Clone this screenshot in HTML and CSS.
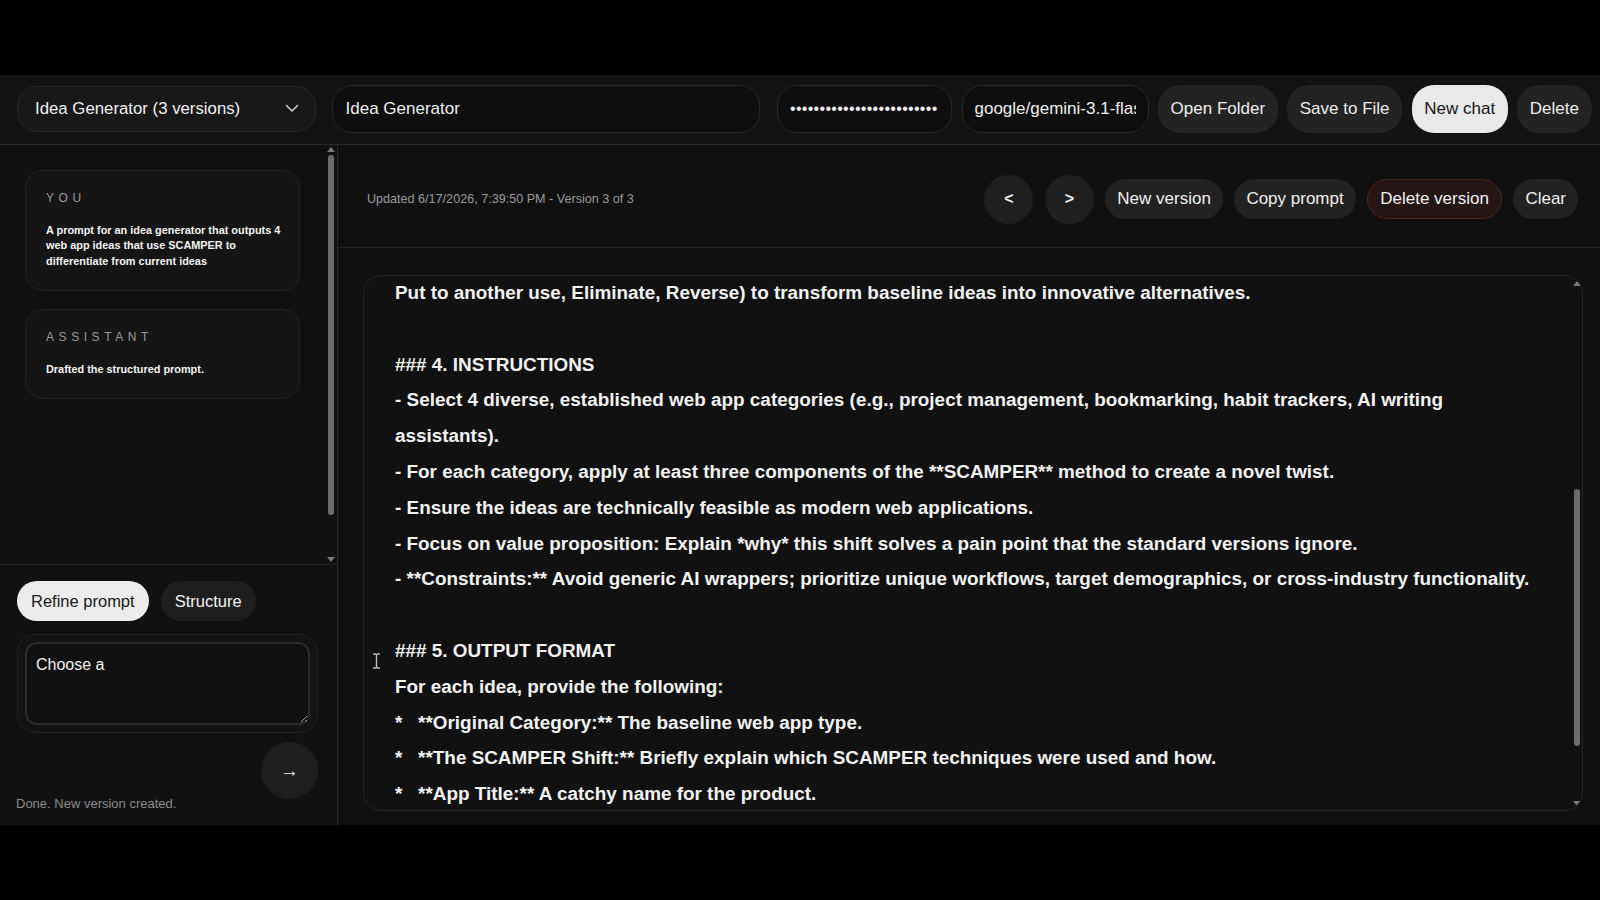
FILE: index.html
```html
<!DOCTYPE html>
<html lang="en">
<head>
<meta charset="UTF-8" />
<title>Prompt Studio</title>
<link rel="stylesheet" href="styles.css">
</head>
<body>

<div class="app">
    <!-- top bar -->
    <header class="topbar">
        <div class="picker">
            <span>Idea Generator (3 versions)</span>
            <svg class="chev" width="14" height="9" viewBox="0 0 14 9"><path d="M1.5 1.5 7 7l5.5-5.5" fill="none" stroke="#cfcfcf" stroke-width="1.6" stroke-linecap="round" stroke-linejoin="round"/></svg>
        </div>
        <input class="field title" type="text" value="Idea Generator">
        <input class="field key" type="password" value="abcdefghijklmnopqrstuvwxy">
        <input class="field model" type="text" value="google/gemini-3.1-flash-preview">
        <button class="pill">Open Folder</button>
        <button class="pill">Save to File</button>
        <button class="pill light">New chat</button>
        <button class="pill">Delete</button>
    </header>

    <div class="body">
        <!-- sidebar -->
        <aside class="side">
            <div class="history">
                <div class="msgs">
                    <div class="msg">
                        <div class="who">YOU</div>
                        <div class="txt">A prompt for an idea generator that outputs 4 web app ideas that use SCAMPER to differentiate from current ideas</div>
                    </div>
                    <div class="msg">
                        <div class="who">ASSISTANT</div>
                        <div class="txt">Drafted the structured prompt.</div>
                    </div>
                </div>
                <div class="sbar">
                    <i class="arr up"></i>
                    <div class="thumb side-thumb"></div>
                    <i class="arr down"></i>
                </div>
            </div>

            <div class="composer">
                <div class="modes">
                    <button class="mode on">Refine prompt</button>
                    <button class="mode">Structure</button>
                </div>
                <div class="inbox">
                    <textarea>Choose a</textarea>
                </div>
                <div class="sendrow">
                    <button class="send">&rarr;</button>
                </div>
                <div class="status">Done. New version created.</div>
            </div>
        </aside>

        <!-- main panel -->
        <main class="panel">
            <div class="toolbar">
                <div class="meta">Updated 6/17/2026, 7:39:50 PM - Version 3 of 3</div>
                <div class="tools">
                    <button class="circ">&lt;</button>
                    <button class="circ">&gt;</button>
                    <button class="tb">New version</button>
                    <button class="tb">Copy prompt</button>
                    <button class="tb danger">Delete version</button>
                    <button class="tb">Clear</button>
                </div>
            </div>

            <div class="editwrap">
                <div class="editor">
<div class="prompt">Put to another use, Eliminate, Reverse) to transform baseline ideas into innovative alternatives.

### 4. INSTRUCTIONS
- Select 4 diverse, established web app categories (e.g., project management, bookmarking, habit trackers, AI writing
assistants).
- For each category, apply at least three components of the **SCAMPER** method to create a novel twist.
- Ensure the ideas are technically feasible as modern web applications.
- Focus on value proposition: Explain *why* this shift solves a pain point that the standard versions ignore.
- **Constraints:** Avoid generic AI wrappers; prioritize unique workflows, target demographics, or cross-industry functionality.

### 5. OUTPUT FORMAT
For each idea, provide the following:
*   **Original Category:** The baseline web app type.
*   **The SCAMPER Shift:** Briefly explain which SCAMPER techniques were used and how.
*   **App Title:** A catchy name for the product.</div>
                    <div class="sbar ed">
                        <i class="arr up"></i>
                        <div class="thumb ed-thumb"></div>
                        <i class="arr down"></i>
                    </div>
                    <!-- mouse pointer -->
                    <svg class="ibeam" width="9" height="16" viewBox="0 0 9 16"><path d="M1 1h2.5L4.5 2l1-1H8M4.5 2v12M1 15h2.5l1-1 1 1H8" fill="none" stroke="#bbb" stroke-width="1.4"/></svg>
                </div>
            </div>
        </main>
    </div>
</div>

</body>
</html>
```

FILE: styles.css
```css
/* --- Page ----------------------------------------------------------- */
body{
    margin:0;
    background:#000;
    font-family:"Liberation Sans",Arial,Helvetica,sans-serif;
    color:#eee;
}
button,input,textarea{
    font-family:inherit;
    color:inherit;
}
button{ white-space:nowrap; }
.app{
    margin-top:75px;
    height:750px;
    background:#111;
    display:flex;
    flex-direction:column;
}

/* --- Top bar -------------------------------------------------------- */
.topbar{
    height:70px;
    flex:none;
    border-bottom:1px solid #272727;
    background:#131313;
    display:flex;
    align-items:center;
    padding:0 10px 2px 17px;
    box-sizing:border-box;
    gap:9.5px;
}
.topbar > *{ flex:none; }
.picker{
    width:299px;
    height:46px;
    box-sizing:border-box;
    border:1px solid #282828;
    background:#181818;
    border-radius:20px;
    display:flex;
    align-items:center;
    justify-content:space-between;
    padding:0 16px 0 17px;
    font-size:16.8px;
    color:#f0f0f0;
    margin-right:6px;
}
.field{
    height:48px;
    box-sizing:border-box;
    border:1px solid #282828;
    background:#0e0e0e;
    border-radius:20px;
    font-size:17px;
    padding:0 12px;
    outline:none;
    color:#eee;
}
.title{ width:428px; padding-left:13px; margin-right:8px; }
.key{ width:175px; font-size:16px; letter-spacing:.3px; }
.model{ width:187px; }
.pill{
    height:48px;
    border:none;
    border-radius:22px;
    background:#232323;
    font-size:17px;
    padding:0 12.6px;
    color:#eee;
}
.pill.light{ background:#e9e9e9; color:#161616; }

/* --- Body ----------------------------------------------------------- */
.body{
    flex:1;
    display:flex;
    min-height:0;
}

/* --- Sidebar -------------------------------------------------------- */
.side{
    width:337px;
    flex:none;
    border-right:1px solid #272727;
    display:flex;
    flex-direction:column;
    background:#111;
}
.history{
    height:419px;
    border-bottom:1px solid #262626;
    display:flex;
}
.msgs{
    flex:1;
    padding:25px 0 0 25px;
    display:flex;
    flex-direction:column;
    gap:18px;
}
.msg{
    width:275px;
    box-sizing:border-box;
    background:#151515;
    border:1px solid #232323;
    border-radius:18px;
    padding:19px 14px 21px 20px;
}
.who{
    font-size:12px;
    line-height:16px;
    letter-spacing:.38em;
    color:#9a9a9a;
    margin-bottom:17px;
}
.txt{
    font-size:10.9px;
    line-height:15.3px;
    font-weight:bold;
    color:#f4f4f4;
}

/* fake scrollbars */
.sbar{
    width:12px;
    flex:none;
    display:flex;
    flex-direction:column;
    align-items:center;
    padding:2px 0;
}
.arr{
    width:0;
    height:0;
    border-left:4px solid transparent;
    border-right:4px solid transparent;
}
.arr.up{ border-bottom:5px solid #7a7a7a; }
.arr.down{ border-top:5px solid #7a7a7a; margin-top:auto; }
.thumb{
    width:6px;
    background:#6c6c6c;
    border-radius:3px;
}
.side-thumb{ margin-top:3px; height:360px; }

/* composer */
.composer{
    flex:1;
    padding:16px 19px 0 17px;
    display:flex;
    flex-direction:column;
}
.modes{
    display:flex;
    gap:12px;
}
.mode{
    height:40px;
    border:none;
    border-radius:20px;
    background:#1e1e1e;
    font-size:16.5px;
    padding:0 14px;
    color:#f2f2f2;
}
.mode.on{ background:#ececec; color:#1a1a1a; }
.inbox{
    margin-top:13px;
    height:99px;
    box-sizing:border-box;
    border:1px solid #222;
    background:#141414;
    border-radius:18px;
    padding:7px;
}
.inbox textarea{
    width:100%;
    height:100%;
    box-sizing:border-box;
    resize:vertical;
    background:#101010;
    border:2px solid #2c2c2c;
    border-radius:12px;
    font-size:16px;
    line-height:18px;
    padding:12px 9px;
    outline:none;
    color:#f2f2f2;
}
.sendrow{
    display:flex;
    justify-content:flex-end;
    margin-top:9px;
}
.send{
    width:57px;
    height:57px;
    border:none;
    border-radius:50%;
    background:#1e1e1e;
    font-size:19px;
    color:#eee;
}
.status{
    margin-top:-3px;
    margin-left:-1px;
    font-size:13px;
    line-height:16px;
    color:#8c8c8c;
}

/* --- Main panel ----------------------------------------------------- */
.panel{
    flex:1;
    display:flex;
    flex-direction:column;
    background:#101010;
    min-width:0;
}
.toolbar{
    height:103px;
    flex:none;
    box-sizing:border-box;
    border-bottom:1px solid #232323;
    display:flex;
    align-items:center;
    justify-content:space-between;
    padding:6px 22px 0 29px;
}
.meta{
    font-size:12.6px;
    color:#9a9a9a;
}
.tools{
    display:flex;
    align-items:center;
    gap:11.5px;
}
.circ{
    width:49px;
    height:49px;
    border:none;
    border-radius:50%;
    background:#1f1f1f;
    font-size:16px;
    font-weight:bold;
    color:#f2f2f2;
}
.tb{
    height:40px;
    border:none;
    border-radius:20px;
    background:#222;
    font-size:17px;
    padding:0 12px;
    color:#f0f0f0;
}
.tb.danger{
    background:#261515;
    border:1px solid #4e2323;
}

.editwrap{
    flex:1;
    min-height:0;
    padding:27px 17px 14px 25px;
    display:flex;
}
.editor{
    flex:1;
    position:relative;
    display:flex;
    border:1px solid #242424;
    border-radius:18px;
    background:#111;
    overflow:hidden;
}
.prompt{
    flex:1;
    white-space:pre;
    padding:0 0 0 31px;
    margin-top:-1px;
    font-size:18.9px;
    line-height:35.8px;
    font-weight:bold;
    color:#f3f3f3;
    overflow:hidden;
}
.sbar.ed{ padding:5px 0 4px; margin-right:-1px; }
.ed-thumb{ margin-top:203px; height:257px; }
.ibeam{
    position:absolute;
    left:8px;
    top:377px;
}
```
